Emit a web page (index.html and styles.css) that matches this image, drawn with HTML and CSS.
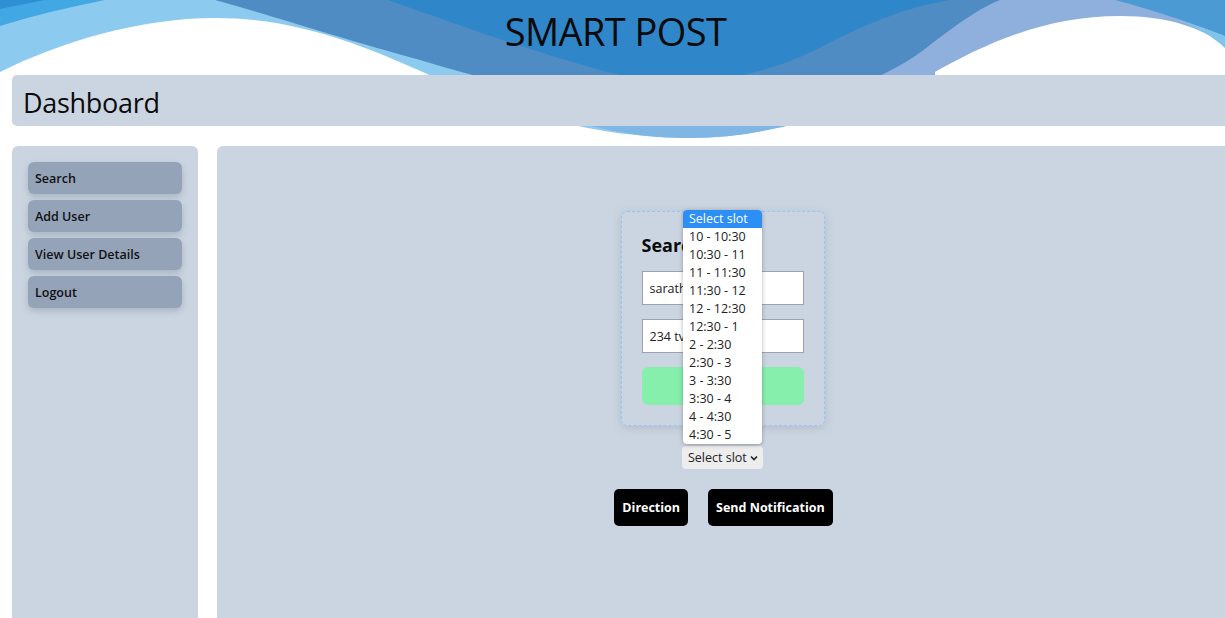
FILE: index.html
```html
<!DOCTYPE html>
<html lang="en">
<head>
<meta charset="utf-8">
<title>Smart Post</title>
<link rel="stylesheet" href="styles.css">
</head>
<body>
<div class="page">
  <svg class="waves" width="1225" height="140" viewBox="0 0 1225 140" xmlns="http://www.w3.org/2000/svg" aria-hidden="true">
    <rect width="1225" height="140" fill="#ffffff"/>
    <path d="M0,72 C60,42 140,18 215,18 C300,18 370,48 440,80 C520,115 600,138 690,138 C770,138 850,110 935,75 L935,0 L0,0 Z" fill="#8ccbef"/>
    <path d="M520,100 C560,120 620,138 690,138 C770,138 850,110 935,75 L935,0 L520,0 Z" fill="#80b6e4"/>
    <path d="M780,78 L928,76 C990,40 1050,16 1120,16 C1170,16 1200,28 1225,45 L1225,0 L780,0 Z" fill="#8fb0dc"/>
    <path d="M215,0 C280,18 340,38 420,60 C520,90 600,108 690,112 C800,112 880,85 930,45 C960,22 980,8 1000,0 Z" fill="#4f8cc4"/>
    <path d="M388,0 C440,18 520,48 600,70 C680,92 760,80 825,45 C870,22 910,6 950,0 Z" fill="#2f86c8"/>
    <path d="M0,0 L105,0 C70,7 35,15 0,26 Z" fill="#42a8e3"/>
    <path d="M0,0 L45,0 C30,3 15,6 0,9 Z" fill="#2f8fd4"/>
    <path d="M1178,20 C1198,25 1214,31 1225,35 L1225,48 C1212,36 1196,26 1178,20 Z" fill="#80c4ea"/>
    <path d="M1115,0 L1225,0 L1225,36 C1200,26 1160,12 1115,0 Z" fill="#4b9ad4"/>
  </svg>

  <header class="header">
    <h1 class="brand">SMART POST</h1>
  </header>

  <div class="titlebar">
    <h2 class="titlebar-text">Dashboard</h2>
  </div>

  <div class="layout">
    <nav class="sidebar">
      <a class="nav-btn">Search</a>
      <a class="nav-btn">Add User</a>
      <a class="nav-btn">View User Details</a>
      <a class="nav-btn">Logout</a>
    </nav>

    <main class="main">
      <div class="stack">
        <form class="card">
          <h3 class="card-title">Search</h3>
          <input class="field" type="text" value="sarath">
          <input class="field" type="text" value="234 tvm road">
          <button class="search-btn" type="button" aria-label="Search"></button>
        </form>

        <div class="slot">
          <div class="slot-select">
            <span>Select slot</span>
            <svg class="chev" width="8" height="6" viewBox="0 0 8 6"><path d="M1,1.5 L4,4.5 L7,1.5" fill="none" stroke="#222" stroke-width="1.6"/></svg>
          </div>
          <ul class="slot-list">
            <li class="slot-item active">Select slot</li>
            <li class="slot-item">10 - 10:30</li>
            <li class="slot-item">10:30 - 11</li>
            <li class="slot-item">11 - 11:30</li>
            <li class="slot-item">11:30 - 12</li>
            <li class="slot-item">12 - 12:30</li>
            <li class="slot-item">12:30 - 1</li>
            <li class="slot-item">2 - 2:30</li>
            <li class="slot-item">2:30 - 3</li>
            <li class="slot-item">3 - 3:30</li>
            <li class="slot-item">3:30 - 4</li>
            <li class="slot-item">4 - 4:30</li>
            <li class="slot-item">4:30 - 5</li>
          </ul>
        </div>

        <div class="actions">
          <button class="dark-btn" type="button">Direction</button>
          <button class="dark-btn" type="button">Send Notification</button>
        </div>
      </div>
    </main>
  </div>
</div>
</body>
</html>
```

FILE: styles.css
```css
html, body {
  margin: 0;
  padding: 0;
  overflow: hidden;
  background: #ffffff;
}

body {
  font-family: "Open Sans", "Noto Sans", sans-serif;
  color: #111;
}

.page {
  position: relative;
  width: 1228px;
  height: 618px;
}

.waves {
  position: absolute;
  top: 0;
  left: 0;
  z-index: 0;
}

.header {
  position: relative;
  z-index: 1;
  height: 75px;
  display: flex;
  justify-content: center;
}

.brand {
  margin: 0;
  padding-top: 12px;
  padding-left: 3px;
  font-size: 38px;
  font-weight: 400;
  line-height: 1;
  color: #0a0a0a;
  letter-spacing: -0.6px;
}

.titlebar {
  position: relative;
  z-index: 1;
  margin-left: 12px;
  height: 51px;
  box-sizing: border-box;
  padding: 3px 0 0 11px;
  background: #cbd5e1;
  border-radius: 5px 0 0 5px;
  display: flex;
  align-items: center;
}

.titlebar-text {
  margin: 0;
  font-size: 27px;
  font-weight: 400;
  line-height: 1;
  color: #0a0a0a;
  letter-spacing: -0.3px;
}

.layout {
  position: relative;
  z-index: 1;
  display: flex;
  gap: 19px;
  margin-top: 20px;
  margin-left: 12px;
  height: 480px;
}

.sidebar {
  width: 154px;
  flex: none;
  background: #cbd5e1;
  border-radius: 6px 6px 0 0;
  padding: 16px;
  display: flex;
  flex-direction: column;
  gap: 6px;
}

.nav-btn {
  height: 32px;
  display: flex;
  align-items: center;
  padding-left: 7px;
  background: #94a3b8;
  border-radius: 6px;
  font-size: 12.5px;
  font-weight: 600;
  color: #111;
  box-shadow: 0 3px 6px rgba(71, 85, 105, 0.25);
}

.main {
  flex: 1;
  background: #cbd5e1;
  border-radius: 6px 0 0 0;
  display: flex;
  justify-content: center;
  padding-top: 65px;
}

.stack {
  display: flex;
  flex-direction: column;
  align-items: center;
}

.card {
  width: 162px;
  padding: 20px;
  border: 1px dashed #93c5fd;
  border-radius: 6px;
  box-shadow: 0 2px 8px rgba(100, 116, 139, 0.25);
  display: flex;
  flex-direction: column;
}

.card-title {
  margin: 0 0 13px;
  font-size: 18px;
  font-weight: 700;
  line-height: 26px;
  color: #0a0a0a;
}

.field {
  box-sizing: border-box;
  width: 162px;
  height: 34px;
  margin: 0 0 14px;
  padding: 0 7px;
  border: 1px solid #9aa3af;
  background: #ffffff;
  font-family: inherit;
  font-size: 12.5px;
  color: #222;
}

.search-btn {
  height: 38px;
  border: none;
  border-radius: 6px;
  background: #86efac;
  color: #ffffff;
  font-family: inherit;
  font-weight: 700;
  font-size: 13px;
}

.slot {
  position: relative;
  margin-top: 20px;
}

.slot-select {
  box-sizing: border-box;
  width: 81px;
  height: 23px;
  display: flex;
  align-items: center;
  justify-content: space-between;
  padding: 0 5px 0 6px;
  background: #ededed;
  border-radius: 4px;
  font-size: 12.5px;
  color: #222;
}

.chev {
  display: block;
}

.slot-list {
  position: absolute;
  left: 1px;
  bottom: 25px;
  width: 79px;
  margin: 0;
  padding: 0;
  list-style: none;
  background: #ffffff;
  border-radius: 4px;
  box-shadow: 0 1px 4px rgba(0, 0, 0, 0.3);
  overflow: hidden;
}

.slot-item {
  height: 18px;
  line-height: 18px;
  padding-left: 6px;
  font-size: 12.5px;
  color: #222;
  white-space: nowrap;
}

.slot-item.active {
  background: #2b8ff5;
  color: #ffffff;
}

.actions {
  display: flex;
  gap: 20px;
  margin-top: 20px;
  padding-left: 2px;
}

.dark-btn {
  height: 37px;
  padding: 0 8px;
  border: none;
  border-radius: 5px;
  background: #000000;
  color: #ffffff;
  font-family: inherit;
  font-weight: 700;
  font-size: 12.5px;
}
```
